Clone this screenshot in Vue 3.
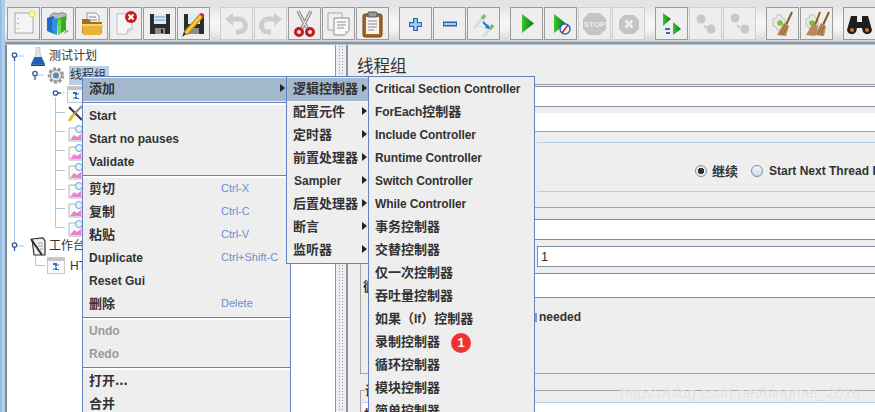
<script setup>
const treeRows = [
  { lv: 0, icon: 'flask', text: '测试计划' },
  { lv: 1, icon: 'gear', text: '线程组', sel: true },
  { lv: 2, icon: 'win', text: '' },
  { lv: 2, icon: 'tool', text: '' },
  { lv: 2, icon: 'graph', text: '' },
  { lv: 2, icon: 'graph', text: '' },
  { lv: 2, icon: 'graph', text: '' },
  { lv: 2, icon: 'graph', text: '' },
  { lv: 2, icon: 'graph', text: '' },
  { lv: 2, icon: 'graph', text: '' },
  { lv: 0, icon: 'bench', text: '工作台' },
  { lv: 1, icon: 'win', text: 'HTTP(S) Test Script Recorder', latin: true }
]
const ticks = [112, 131, 150, 170, 189, 208, 227]
const mainGroups = [
  [{ t: 'Start' }, { t: 'Start no pauses' }, { t: 'Validate' }],
  [
    { t: '剪切', c: true, k: 'Ctrl-X' },
    { t: '复制', c: true, k: 'Ctrl-C' },
    { t: '粘贴', c: true, k: 'Ctrl-V' },
    { t: 'Duplicate', k: 'Ctrl+Shift-C' },
    { t: 'Reset Gui' },
    { t: '删除', c: true, k: 'Delete' }
  ],
  [{ t: 'Undo', off: true }, { t: 'Redo', off: true }],
  [{ t: '打开...', c: true }, { t: '合并', c: true }]
]
const sub1 = [
  { t: '逻辑控制器', c: true, on: true },
  { t: '配置元件', c: true },
  { t: '定时器', c: true },
  { t: '前置处理器', c: true },
  { t: 'Sampler' },
  { t: '后置处理器', c: true },
  { t: '断言', c: true },
  { t: '监听器', c: true }
]
const sub2 = [
  { t: 'Critical Section Controller' },
  { t: 'ForEach', c2: '控制器' },
  { t: 'Include Controller' },
  { t: 'Runtime Controller' },
  { t: 'Switch Controller' },
  { t: 'While Controller' },
  { c2: '事务控制器' },
  { c2: '交替控制器' },
  { c2: '仅一次控制器' },
  { c2: '吞吐量控制器' },
  { c2: '如果（', t2: 'If', c3: '）控制器' },
  { c2: '录制控制器', badge: '1' },
  { c2: '循环控制器' },
  { c2: '模块控制器' },
  { c2: '简单控制器' }
]
</script>

<template>
  <div class="page">
    <div class="frame"></div>
    <div class="main">
      <div class="topstrip"></div>
      <div class="toolbar">
        <div class="tgroup">
          <div class="tb"><svg viewBox="0 0 31 31"><rect x="7" y="5" width="18" height="20" fill="#f5f5f5" stroke="#a8a8a8"/><path d="M10 10v1M10 15v1M10 20v1" stroke="#888"/><circle cx="24" cy="6" r="3" fill="#fff3a0" stroke="#ecd860"/></svg></div>
          <div class="tb"><svg viewBox="0 0 31 31"><path d="M8 8q3-5 8-2q3-3 8 0v6H8z" fill="#b5bdc2" stroke="#7d888e"/><path d="M5 10l7-2v18l-7-3z" fill="#1f68c9"/><path d="M10 11l5-1v17l-5-2z" fill="#2f8fe0"/><path d="M15 11l9-3v14l-8 5z" fill="#34b01f"/><path d="M16 12l3-1v14l-3 2z" fill="#6fd84c"/><path d="M24 22l3 1-5 3z" fill="#999"/></svg></div>
          <div class="tb"><svg viewBox="0 0 31 31"><path d="M11 5h9l3 3v9H11z" fill="#f4f4f4" stroke="#999"/><path d="M13 9h7M13 12h8" stroke="#888"/><path d="M6 11h7l2 3h11v11H6z" fill="#a66f12"/><path d="M6 16h21l-2 11H7z" fill="#eab23c"/><path d="M6 16h21v2H6z" fill="#f7d47a"/></svg></div>
          <div class="tb"><svg viewBox="0 0 31 31"><path d="M7 6h15v15l-5 5H7z" fill="#f6f6f6" stroke="#bdbdbd"/><path d="M17 26l1-5h4" fill="#ddd" stroke="#bdbdbd"/><circle cx="21" cy="9" r="6" fill="#c81c1c"/><path d="M18.500 6.500l5 5m0-5l-5 5" stroke="#fff" stroke-width="2"/></svg></div>
          <div class="tb"><svg viewBox="0 0 31 31"><path d="M6 6h20v20H6z" fill="#2c2c2c"/><path d="M10 6h12v10H10z" fill="#dfe9f2"/><path d="M11 9h10M11 12h10" stroke="#6d8db0"/><path d="M11 20h10v6H11z" fill="#8c8c8c"/><path d="M17 21h2v4h-2z" fill="#222"/></svg></div>
          <div class="tb"><svg viewBox="0 0 31 31"><path d="M6 6h20v20H6z" fill="#2c2c2c"/><path d="M10 6h12v10H10z" fill="#dfe9f2"/><path d="M11 20h10v6H11z" fill="#8c8c8c"/><path d="M7 26L24 7" stroke="#c8901a" stroke-width="5"/><path d="M7 26L24 7" stroke="#f6d040" stroke-width="2.500"/><path d="M4 29l2-5 2 2z" fill="#222"/><path d="M23 8l2-2" stroke="#c83030" stroke-width="4"/></svg></div>
        </div>
        <div class="tgroup">
          <div class="tb off"><svg viewBox="0 0 31 31"><path d="M11 11h7a6 6 0 0 1 0 13h-3" fill="none" stroke="#cdcdcd" stroke-width="5"/><path d="M4 11l8-6v13z" fill="#cdcdcd"/></svg></div>
          <div class="tb off"><svg viewBox="0 0 31 31"><path d="M20 11h-7a6 6 0 0 0 0 13h3" fill="none" stroke="#cdcdcd" stroke-width="5"/><path d="M27 11l-8-6v13z" fill="#cdcdcd"/></svg></div>
          <div class="tb"><svg viewBox="0 0 31 31"><path d="M9 3l9 17M22 3l-9 17" stroke="#8a8a8a" stroke-width="3.500"/><path d="M9 3l9 17M22 3l-9 17" stroke="#dcdcdc" stroke-width="1.500"/><circle cx="10" cy="24" r="3.500" fill="none" stroke="#c41a22" stroke-width="3"/><circle cx="21" cy="24" r="3.500" fill="none" stroke="#c41a22" stroke-width="3"/></svg></div>
          <div class="tb"><svg viewBox="0 0 31 31"><path d="M5 5h14v17H5z" fill="#f2f2f2" stroke="#a5a5a5"/><path d="M11 10h15v13l-4 4H11z" fill="#fafafa" stroke="#8c8c8c"/><path d="M14 14h9M14 17h9M14 20h7" stroke="#8c8c8c"/><path d="M22 27v-4h4z" fill="#ccc"/></svg></div>
          <div class="tb"><svg viewBox="0 0 31 31"><rect x="6" y="6" width="19" height="23" rx="2" fill="#a8661c" stroke="#6f4010"/><rect x="9" y="9" width="13" height="17" fill="#f5f5f5"/><path d="M11 13h9M11 16h9M11 19h9M11 22h6" stroke="#8a8a8a"/><rect x="11" y="4" width="9" height="5" rx="1" fill="#9a9a9a" stroke="#555"/></svg></div>
        </div>
        <div class="tgroup">
          <div class="tb"><svg viewBox="0 0 31 31"><path d="M15.500 10v13M9 16.500h13" stroke="#2a68b6" stroke-width="5"/><path d="M15.500 11v11M10 16.500h11" stroke="#a8cdf2" stroke-width="2.500"/></svg></div>
          <div class="tb"><svg viewBox="0 0 31 31"><path d="M9 16h14" stroke="#2a68b6" stroke-width="5"/><path d="M10 16h12" stroke="#a8cdf2" stroke-width="2"/></svg></div>
          <div class="tb"><svg viewBox="0 0 31 31"><path d="M6 20L14 11M15 29l7-8" stroke="#d4dcd4" stroke-width="2.500"/><path d="M14 11l3-4M22 21l3-4" stroke="#7cc05e" stroke-width="3.500"/><path d="M9 19h9" stroke="#d8dde6"/><path d="M15 14l4 4" stroke="#1c6fe0" stroke-width="1.800"/><path d="M22 21l-5-1 3-4z" fill="#1c6fe0"/></svg></div>
        </div>
        <div class="tgroup">
          <div class="tb"><svg viewBox="0 0 31 31"><defs><linearGradient id="pl" x1="0" y1="0" x2="1" y2="0"><stop offset="0" stop-color="#3cc23c"/><stop offset="1" stop-color="#087a08"/></linearGradient></defs><path d="M11 6l12 9.500L11 25z" fill="url(#pl)"/></svg></div>
          <div class="tb"><svg viewBox="0 0 31 31"><path d="M9 6l12 9.500L9 25z" fill="url(#pl)"/><circle cx="20" cy="21" r="5" fill="#f4f8ff" stroke="#2a68b6" stroke-width="1.500"/><path d="M17 25l6-8" stroke="#d02020" stroke-width="1.500"/></svg></div>
          <div class="tb off"><svg viewBox="0 0 31 31"><path d="M10 5h11l6 6v10l-6 6H10l-6-6V11z" fill="#c4c4c4"/><text x="15.500" y="19" class="stoptxt">STOP</text></svg></div>
          <div class="tb off"><svg viewBox="0 0 31 31"><path d="M11 7h10l5 5v9l-5 5H11l-5-5v-9z" fill="#c4c4c4"/><path d="M12.500 12.500l7 7m0-7l-7 7" stroke="#ededed" stroke-width="2.500"/></svg></div>
        </div>
        <div class="tgroup">
          <div class="tb"><svg viewBox="0 0 31 31"><path d="M7 5l8 6-8 7z" fill="url(#pl)"/><path d="M17 14l8 7-8 6z" fill="url(#pl)"/><path d="M9 21h5M14 25H10" stroke="#3a66b5" stroke-width="2"/></svg></div>
          <div class="tb off"><svg viewBox="0 0 31 31"><circle cx="11" cy="11" r="4.500" fill="#c8c8c8"/><circle cx="21" cy="21" r="4.500" fill="#c8c8c8"/><path d="M14 18l3 2" stroke="#c8c8c8" stroke-width="2"/></svg></div>
          <div class="tb off"><svg viewBox="0 0 31 31"><circle cx="11" cy="10" r="4.500" fill="#c8c8c8"/><circle cx="21" cy="21" r="4.500" fill="#c8c8c8"/><path d="M13 17l3 3" stroke="#c8c8c8" stroke-width="2"/></svg></div>
        </div>
        <div class="tgroup">
          <div class="tb"><svg viewBox="0 0 31 31"><path d="M6 11l3-1 1-3h4l1 3 3 1v7l-3 1-1 3h-4l-1-3-3-1z" fill="#e8e8e8" stroke="#c0c0c0"/><circle cx="13" cy="15" r="2.800" fill="#7ec02c"/><path d="M25 4l-6 13" stroke="#8c5a20" stroke-width="2"/><path d="M17 15l5 3-3 10-9-1z" fill="#b58a58"/><path d="M13 27l5-10M16 27l4-9" stroke="#8c5a20" stroke-width=".7"/></svg></div>
          <div class="tb"><svg viewBox="0 0 31 31"><path d="M5 11l3-1 1-3h4l1 3 3 1v7l-3 1-1 3H9l-1-3-3-1z" fill="#e8e8e8" stroke="#c0c0c0"/><circle cx="11" cy="15" r="2.800" fill="#7ec02c"/><path d="M19 4l-5 13M28 4l-6 13" stroke="#8c5a20" stroke-width="2"/><path d="M12 15l5 3-3 10-9-1z" fill="#b58a58"/><path d="M20 15l5 3-2 10-10-1z" fill="#b58a58"/><path d="M17 27l4-9M20 27l3-9" stroke="#8c5a20" stroke-width=".7"/></svg></div>
        </div>
        <div class="tgroup">
          <div class="tb"><svg viewBox="0 0 31 31"><path d="M7 8h6v6h5V8h6l4 14a5 5 0 0 1-9 2l-1-4h-5l-1 4a5 5 0 0 1-9-2z" fill="#1e1e1e"/><circle cx="8" cy="22" r="2" fill="#c87830"/><circle cx="23" cy="22" r="2" fill="#c87830"/></svg></div>
        </div>
      </div>
      <div class="toolline"></div>

      <div class="split">
        <div class="tree">
          <svg class="wires" viewBox="7 45 329 367">
            <path d="M14.500 60V246M14.500 246H24M14.500 56H24" stroke="#a9c8e6" fill="none"/>
            <path d="M35.500 75H44" stroke="#a9c8e6" fill="none"/>
            <path d="M55.500 97V227M55.500 93H65" stroke="#a9c8e6" fill="none"/>
            <path v-for="y in ticks" :key="y" :d="`M55.500 ${y + 0.5}H65`" stroke="#a9c8e6"/>
            <path d="M35.500 255V265.500H45" stroke="#a9c8e6" fill="none"/>
            <g fill="#fff" stroke="#2b5f95" stroke-width="1.300">
              <circle cx="14.500" cy="55" r="2.200"/><path d="M14.500 57v4"/>
              <circle cx="35" cy="73.500" r="2.200"/><path d="M35 76v4"/>
              <circle cx="55.500" cy="93" r="2.200"/><path d="M58 93h3"/>
              <circle cx="14.500" cy="245" r="2.200"/><path d="M14.500 247v4"/>
            </g>
          </svg>
          <div v-for="(r, i) in treeRows" :key="i" class="trow" :class="'lv' + r.lv">
            <svg class="ticon" viewBox="0 0 18 19">
              <template v-if="r.icon === 'flask'">
                <path d="M7 0h4v7l5 10H2L7 7z" fill="#dfe5ea" stroke="#a8b0b8" stroke-width=".6"/>
                <path d="M5.500 10h7l3.500 7.500H2z" fill="#1e5fb8"/>
                <path d="M2 17.500h14v1.500H2z" fill="#12407e"/>
              </template>
              <template v-else-if="r.icon === 'gear'">
                <circle cx="9" cy="9.500" r="6.500" fill="none" stroke="#9c9c9c" stroke-width="3.500" stroke-dasharray="3 1.500"/>
                <circle cx="9" cy="9.500" r="5.500" fill="#e6e6e6" stroke="#8c8c8c"/>
                <circle cx="9" cy="9.500" r="3" fill="#5f87b8"/>
              </template>
              <template v-else-if="r.icon === 'win'">
                <rect x=".5" y="1.500" width="17" height="16" fill="#fafafa" stroke="#c8c8c8"/>
                <rect x="1" y="2" width="16" height="3" fill="#c4c4c4"/>
                <path d="M6 7h4v2l2-1v1l-4 2V9H6zM12 14H8v-1l-2 1v-1l4-2v2h2z" fill="#2f70c4"/>
              </template>
              <template v-else-if="r.icon === 'tool'">
                <path d="M2 3l13 13" stroke="#3a3a3a" stroke-width="2.200"/>
                <path d="M15 2L7 10" stroke="#8a8a8a" stroke-width="2"/>
                <path d="M7 10l-5 7" stroke="#e8b820" stroke-width="3"/>
              </template>
              <template v-else-if="r.icon === 'graph'">
                <path d="M2 5h13v13H2z" fill="#fafafa" stroke="#b4b4b4"/>
                <path d="M3 17l4-5 3 2 4-3v6H3z" fill="#ee80d0"/>
                <circle cx="12" cy="6" r="3.500" fill="#e6f3ff" stroke="#6ca0dc"/>
              </template>
              <template v-else>
                <path d="M3 2l11-1 2 3v14H5z" fill="#f1f1e8" stroke="#2f2f2f" stroke-width="1.200"/>
                <path d="M2 2l11 16" stroke="#2f2f2f" stroke-width="2"/>
                <path d="M9 6h5M9 9h5M11 12h3" stroke="#8aa0b8"/>
              </template>
            </svg>
            <span class="tlabel" :class="{ sel: r.sel, tlatin: r.latin }">{{ r.text }}</span>
          </div>
        </div>
        <div class="divider"></div>

        <div class="right">
          <div class="rtitle">线程组</div>
          <div class="namebar"><div class="darkbox"></div></div>
          <div class="commentbox"></div>
          <div class="group1">
            <div class="actions">
              <span class="radio checked"></span><span class="rlabel first cjk">继续</span>
              <span class="radio second"></span><span class="rlabel">Start Next Thread Loop</span>
            </div>
            <div class="threadsline"></div>
            <div class="darkbox threads"></div>
            <div class="rampup"><div class="darkbox inputone">1</div></div>
            <div class="loop">
              <span class="looplabel cjk">循环次数</span>
              <div class="darkbox loopbox"></div>
            </div>
            <div class="neededrow"><span class="tick"></span><span class="needed">needed</span></div>
          </div>
          <div class="group2">
            <span class="g2label cjk">调度器配置</span>
            <div class="g2body"><span class="g2text cjk">持续时间</span></div>
          </div>
        </div>
      </div>
    </div>

    <div class="menu mainmenu">
      <div class="mi on head"><span class="cjk">添加</span><i class="arrow head-arrow"></i></div>
      <template v-for="(g, gi) in mainGroups" :key="gi">
        <div class="sep"></div>
        <div v-for="m in g" :key="m.t" class="mi" :class="{ off: m.off }">
          <span class="milabel" :class="{ cjk: m.c }">{{ m.t }}</span>
          <span v-if="m.k" class="key">{{ m.k }}</span>
        </div>
      </template>
    </div>

    <div class="menu submenu1">
      <div v-for="m in sub1" :key="m.t" class="mi" :class="{ on: m.on }">
        <span :class="{ cjk: m.c, sampler: !m.c }">{{ m.t }}</span><i class="arrow"></i>
      </div>
    </div>

    <div class="menu submenu2">
      <div v-for="(m, i) in sub2" :key="i" class="mi">
        <span v-if="m.t">{{ m.t }}</span>
        <span v-if="m.c2" class="cjk">{{ m.c2 }}</span>
        <span v-if="m.t2">{{ m.t2 }}</span>
        <span v-if="m.c3" class="cjk">{{ m.c3 }}</span>
        <span v-if="m.badge" class="badge">{{ m.badge }}</span>
      </div>
    </div>

    <div class="watermark">https://blog.csdn.net/bingmei_2016</div>
  </div>
</template>

<style scoped>
.page {
  position: relative;
  width: 875px;
  height: 412px;
  overflow: hidden;
  display: flex;
  background: #eeeeee;
  font-family: "Liberation Sans", "Noto Sans CJK SC", sans-serif;
  color: #333;
}
.frame {
  width: 5px;
  flex: none;
  background: linear-gradient(90deg, #8fb6da, #b4d2ee 60%, #a5c6e4);
}
.main {
  flex: 1;
  min-width: 0;
  display: flex;
  flex-direction: column;
}
.topstrip {
  height: 5px;
  flex: none;
  background: #e4e4e4;
}
.toolbar {
  height: 36px;
  flex: none;
  display: flex;
  gap: 10px;
  padding: 2px 0 0 2px;
  box-sizing: border-box;
  overflow: hidden;
  background: linear-gradient(180deg, #e2e2e2, #f7f7f7 45%, #f2f2f2 70%, #d8d8d8);
}
.tgroup {
  display: flex;
  gap: 1px;
  flex: none;
}
.tb {
  width: 33px;
  height: 33px;
  box-sizing: border-box;
  border: 1px solid #9a9a9a;
  background: #eeeeee;
}
.tb.off {
  border-color: #cfcfcf;
}
.tb svg {
  display: block;
  width: 31px;
  height: 31px;
}
.stoptxt {
  font: bold 8px "Liberation Sans", sans-serif;
  fill: #ececec;
  text-anchor: middle;
}
.toolline {
  height: 4px;
  flex: none;
  background: linear-gradient(180deg, #d5d8db, #8495a5 40%, #8495a5 70%, #e8e8e8);
}
.split {
  flex: 1;
  display: flex;
  min-height: 0;
}
.tree {
  position: relative;
  width: 329px;
  flex: none;
  margin-left: 2px;
  box-sizing: border-box;
  padding-top: 2px;
  background: #fff;
  box-shadow: -2px 0 0 #7f8c99;
  border-right: 1px solid #8a98a6;
}
.wires {
  position: absolute;
  left: 0;
  top: 0;
  width: 329px;
  height: 367px;
}
.trow {
  position: relative;
  height: 19px;
  display: flex;
  align-items: center;
}
.lv0 { padding-left: 22px; }
.lv1 { padding-left: 40px; }
.lv2 { padding-left: 60px; }
.ticon {
  width: 18px;
  height: 19px;
  flex: none;
  margin-right: 1px;
}
.lv1 .ticon {
  margin-right: 4px;
}
.tlabel {
  font-size: 12px;
  line-height: 16px;
  padding: 0 1px 3px;
  color: #333;
  white-space: nowrap;
  font-family: "Noto Sans CJK SC", sans-serif;
}
.tlabel.tlatin {
  font-family: "Liberation Sans", sans-serif;
  padding-bottom: 0;
}
.tlabel.sel {
  background: #b8cfe5;
  width: 38px;
}
.divider {
  width: 10px;
  flex: none;
  background-image: radial-gradient(circle, #9a9a9a 0.7px, transparent 0.9px);
  background-size: 3px 3px;
  background-position: 2px 0;
  background-repeat: repeat;
  background-clip: content-box;
  padding: 0 2px;
  box-sizing: border-box;
}
.right {
  flex: 1;
  min-width: 0;
  overflow: hidden;
  border-left: 2px solid #8495a5;
  background: #eeeeee;
}
.rtitle {
  height: 39px;
  box-sizing: border-box;
  padding: 9px 0 0 9px;
  font: 16.500px/22px "Noto Sans CJK SC", sans-serif;
  color: #333;
}
.namebar {
  border-top: 1px solid #9a9a9a;
  padding-top: 1px;
}
.darkbox {
  height: 19px;
  border-top: 1px solid #7f8da0;
  border-bottom: 1px solid #7f8da0;
  background: #fff;
}
.commentbox {
  margin-top: 6px;
  height: 18px;
  background: #fff;
  border-bottom: 1px solid #a5a5a5;
}
.group1 {
  margin-left: 12px;
  height: 231px;
  border-left: 1px solid #a5a5a5;
  border-bottom: 1px solid #a5a5a5;
  padding-top: 10px;
  box-sizing: content-box;
}
.actions {
  height: 40px;
  padding-top: 8px;
  box-sizing: content-box;
  margin-left: 176px;
  border-top: 1px solid #b5cfe6;
  border-bottom: 1px solid #b5cfe6;
  display: flex;
  align-items: center;
  padding-left: 158px;
  white-space: nowrap;
  font-size: 12px;
  font-weight: bold;
}
.radio {
  width: 12px;
  height: 12px;
  flex: none;
  box-sizing: border-box;
  border-radius: 50%;
  border: 1px solid #7f8da0;
  background: linear-gradient(180deg, #f4f7fb, #c8d8e8);
}
.radio.checked {
  background: radial-gradient(circle, #333 0 3px, #e6eef6 3.500px);
}
.radio.second {
  margin-left: 13px;
}
.rlabel {
  margin-left: 6px;
}
.rlabel.first {
  margin-left: 5px;
  margin-bottom: 2px;
}
.threadsline {
  margin-top: 15px;
  border-top: 1px solid #a5a5a5;
  height: 11px;
}
.threads {
  height: 19px;
}
.rampup {
  margin-top: 6px;
  padding-left: 176px;
}
.inputone {
  height: 19px;
  border-left: 1px solid #7f8da0;
  padding-left: 3px;
  font-size: 13px;
  line-height: 19px;
}
.loop {
  margin-top: 6px;
  display: flex;
  align-items: center;
  padding-left: 2px;
}
.looplabel {
  width: 60px;
  flex: none;
  font-size: 13px;
  font-weight: bold;
}
.loopbox {
  flex: 1;
  height: 23px;
}
.neededrow {
  height: 38px;
  padding: 0 0 0 174px;
  box-sizing: border-box;
  display: flex;
  align-items: center;
  font-size: 12px;
  font-weight: bold;
}
.tick {
  width: 2px;
  height: 9px;
  background: #6f9fdc;
  margin-right: 2px;
}
.group2 {
  margin: 16px 0 0 12px;
  border-top: 1px solid #a5a5a5;
  border-left: 1px solid #a5a5a5;
  position: relative;
  height: 40px;
}
.g2label {
  position: absolute;
  left: 4px;
  top: -9px;
  font-size: 13px;
  font-weight: bold;
  line-height: 16px;
  background: #eee;
}
.g2body {
  margin: 11px 0 0 2px;
  border-top: 1px solid #b5cfe6;
  height: 30px;
  background: #fff;
  padding: 1px 0 0 1px;
}
.g2text {
  font-size: 13px;
  font-weight: bold;
  line-height: 18px;
  display: block;
  margin-top: 1px;
}
.menu {
  position: absolute;
  top: 76px;
  box-sizing: border-box;
  border: 1px solid #6382bf;
  background: #eeeeee;
  font-size: 12px;
  font-weight: bold;
  padding-top: 1px;
  line-height: 23px;
  white-space: nowrap;
}
.cjk {
  font-size: 13px;
  font-family: "Noto Sans CJK SC", sans-serif;
}
.mi .cjk {
  line-height: 18px;
  margin-bottom: 4px;
}
.mainmenu {
  left: 82px;
  width: 209px;
  height: 360px;
}
.submenu1 {
  left: 286px;
  width: 83px;
  height: 188px;
}
.submenu2 {
  left: 368px;
  width: 167px;
  height: 360px;
  letter-spacing: -0.1px;
}
.submenu2 .cjk {
  letter-spacing: 0;
}
.mi {
  height: 23px;
  display: flex;
  align-items: center;
  padding-left: 6px;
  position: relative;
}
.mi.on {
  background: #a3b8cc;
}
.mi.off {
  color: #9a9a9a;
}
.milabel {
  width: 132px;
  flex: none;
}
.key {
  font-size: 11px;
  font-weight: normal;
  color: #6b8fd0;
  margin-bottom: 2px;
}
.sampler {
  margin-left: 1px;
}
.arrow {
  position: absolute;
  right: 1px;
  top: 6px;
  width: 0;
  height: 0;
  border-left: 5px solid #222;
  border-top: 4.500px solid transparent;
  border-bottom: 4.500px solid transparent;
}
.arrow.head-arrow {
  right: 5px;
}
.sep {
  height: 4px;
  box-sizing: border-box;
  padding-top: 1px;
  border-bottom: 1px solid #fff;
  background: linear-gradient(#eeeeee 1px, #6382bf 1px, #6382bf 2px, #fff 2px);
}
.badge {
  width: 20px;
  height: 20px;
  margin-left: 11px;
  border-radius: 50%;
  background: #f23131;
  color: #fff;
  font-size: 13px;
  line-height: 20px;
  text-align: center;
}
.watermark {
  position: absolute;
  left: 620px;
  top: 383px;
  font-size: 15.500px;
  line-height: 20px;
  color: rgba(205, 205, 205, 0.6);
  text-shadow: 0 0 1px rgba(255, 255, 255, 0.9);
  white-space: nowrap;
}
</style>
